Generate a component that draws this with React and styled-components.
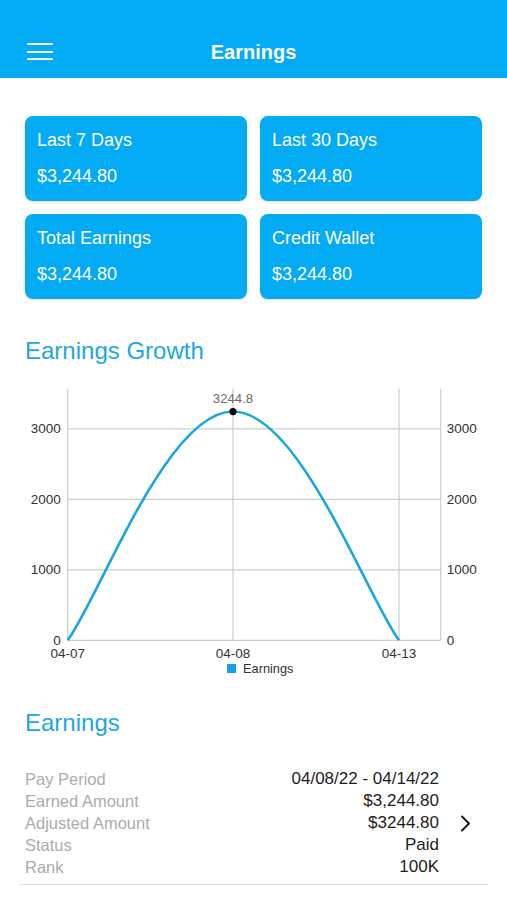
import React from 'react';
import styled, { createGlobalStyle } from 'styled-components';

const BLUE = '#03aaf4';

const GlobalStyle = createGlobalStyle`
  html, body {
    margin: 0;
    padding: 0;
    background: #fff;
    font-family: 'Liberation Sans', Arial, sans-serif;
  }
`;

const Page = styled.div`
  width: 507px;
  min-height: 900px;
  background: #fff;
`;

const Header = styled.header`
  height: 78px;
  box-sizing: border-box;
  padding-top: 30px;
  background: ${BLUE};
`;

const NavBar = styled.div`
  position: relative;
  height: 44px;
  display: flex;
  align-items: center;
  justify-content: center;
`;

const MenuButton = styled.div`
  position: absolute;
  left: 27px;
  top: 13px;
  width: 26px;
  display: flex;
  flex-direction: column;
  gap: 5.5px;
  span {
    display: block;
    height: 2px;
    background: #fff;
    border-radius: 1px;
  }
`;

const NavTitle = styled.h1`
  margin: 0;
  color: #fff;
  font-size: 20px;
  font-weight: 700;
`;

const Content = styled.main`
  padding: 38px 25px 0;
`;

const CardGrid = styled.div`
  display: grid;
  grid-template-columns: 1fr 1fr;
  gap: 13px;
`;

const Card = styled.div`
  height: 85px;
  box-sizing: border-box;
  padding: 13px 12px;
  border-radius: 8px;
  background: ${BLUE};
  color: #fff;
  box-shadow: 0 1px 2px rgba(0, 0, 0, 0.12);
`;

const CardLabel = styled.div`
  font-size: 18px;
  line-height: 22px;
`;

const CardValue = styled.div`
  margin-top: 14px;
  font-size: 18px;
  line-height: 22px;
`;

const SectionTitle = styled.h2`
  margin: ${(p) => p.$top}px 0 0;
  color: #22a7e2;
  font-size: 24px;
  font-weight: 400;
  line-height: 28px;
`;

const ChartSvg = styled.svg`
  display: block;
  margin: 12px -25px 0;
  width: 507px;
  height: 304px;
  font-family: 'Liberation Sans', Arial, sans-serif;
`;

const Details = styled.div`
  margin: 31px -6px 0;
  padding: 0 0 6px 6px;
  display: flex;
  align-items: center;
  border-bottom: 1.5px solid #e2e2e2;
`;

const DetailList = styled.div`
  flex: 1;
`;

const DetailRow = styled.div`
  display: flex;
  justify-content: space-between;
  align-items: center;
  height: 22px;
`;

const DetailLabel = styled.span`
  color: #ababab;
  font-size: 16.5px;
`;

const DetailValue = styled.span`
  color: #1d1d1d;
  font-size: 17px;
`;

const Chevron = styled.div`
  width: 49px;
  display: flex;
  justify-content: center;
  padding-left: 3px;
  box-sizing: border-box;
`;

const cards = [
  { label: 'Last 7 Days', value: '$3,244.80' },
  { label: 'Last 30 Days', value: '$3,244.80' },
  { label: 'Total Earnings', value: '$3,244.80' },
  { label: 'Credit Wallet', value: '$3,244.80' },
];

const details = [
  ['Pay Period', '04/08/22 - 04/14/22'],
  ['Earned Amount', '$3,244.80'],
  ['Adjusted Amount', '$3244.80'],
  ['Status', 'Paid'],
  ['Rank', '100K'],
];

// chart geometry, in svg coords
const X0 = 67.7;
const XR = 440.7;
const Y0 = 263.3;
const PER = 0.0705;
const YMAX = 3569;
const yOf = (v) => Y0 - v * PER;
const points = [
  { x: 67.7, v: 0, label: '04-07' },
  { x: 233, v: 3244.8, label: '04-08' },
  { x: 399, v: 0, label: '04-13' },
];

// cubic bezier like MPAndroidChart, intensity 0.2
function curvePath(pts) {
  const p = pts.map((q) => ({ x: q.x, y: yOf(q.v) }));
  const k = 0.2;
  let d = `M${p[0].x},${p[0].y}`;
  for (let i = 1; i < p.length; i++) {
    const pp = p[Math.max(i - 2, 0)];
    const prev = p[i - 1];
    const cur = p[i];
    const next = p[Math.min(i + 1, p.length - 1)];
    const c1x = prev.x + (cur.x - pp.x) * k;
    const c1y = prev.y + (cur.y - pp.y) * k;
    const c2x = cur.x - (next.x - prev.x) * k;
    const c2y = cur.y - (next.y - prev.y) * k;
    d += ` C${c1x},${c1y} ${c2x},${c2y} ${cur.x},${cur.y}`;
  }
  return d;
}

function EarningsChart() {
  const top = yOf(YMAX);
  const ticks = [0, 1000, 2000, 3000];
  const grid = '#cfcfcf';
  return (
    <ChartSvg viewBox="0 0 507 304">
      {ticks.map((t) => (
        <line key={t} x1={X0} x2={XR} y1={yOf(t)} y2={yOf(t)} stroke={grid} strokeWidth="1.3" />
      ))}
      {points.map((p) => (
        <line key={p.label} x1={p.x} x2={p.x} y1={top} y2={Y0} stroke={grid} strokeWidth="1.3" />
      ))}
      <line x1={XR} x2={XR} y1={top} y2={Y0} stroke={grid} strokeWidth="1.3" />
      {ticks.map((t) => (
        <g key={'l' + t} fontSize="13.5" fill="#333">
          <text x={X0 - 7} y={yOf(t) + 4.5} textAnchor="end">{t}</text>
          <text x={XR + 6} y={yOf(t) + 4.5}>{t}</text>
        </g>
      ))}
      {points.map((p) => (
        <text key={'x' + p.label} x={p.x} y={280.5} fontSize="13.5" fill="#333" textAnchor="middle">
          {p.label}
        </text>
      ))}
      <path d={curvePath(points)} fill="none" stroke="#1ca6e0" strokeWidth="2.6" />
      <circle cx={233} cy={yOf(3244.8)} r="3.6" fill="#000" />
      <text x={233} y={25.5} fontSize="13.2" fill="#6d6d6d" textAnchor="middle">3244.8</text>
      <rect x={227} y={287} width={9} height={9} fill="#14a3e6" />
      <text x={243} y={295.5} fontSize="12.8" fill="#333">Earnings</text>
    </ChartSvg>
  );
}

export default function App() {
  return (
    <Page>
      <GlobalStyle />
      <Header>
        <NavBar>
          <MenuButton>
            <span />
            <span />
            <span />
          </MenuButton>
          <NavTitle>Earnings</NavTitle>
        </NavBar>
      </Header>
      <Content>
        <CardGrid>
          {cards.map((c) => (
            <Card key={c.label}>
              <CardLabel>{c.label}</CardLabel>
              <CardValue>{c.value}</CardValue>
            </Card>
          ))}
        </CardGrid>
        <SectionTitle $top={38}>Earnings Growth</SectionTitle>
        <EarningsChart />
        <SectionTitle $top={28}>Earnings</SectionTitle>
        <Details>
          <DetailList>
            {details.map(([k, v]) => (
              <DetailRow key={k}>
                <DetailLabel>{k}</DetailLabel>
                <DetailValue>{v}</DetailValue>
              </DetailRow>
            ))}
          </DetailList>
          <Chevron>
            <svg width="11" height="17" viewBox="0 0 11 17">
              <path d="M2 1.5 L9 8.5 L2 15.5" fill="none" stroke="#1a1a1a" strokeWidth="2" strokeLinecap="round" strokeLinejoin="round" />
            </svg>
          </Chevron>
        </Details>
      </Content>
    </Page>
  );
}
